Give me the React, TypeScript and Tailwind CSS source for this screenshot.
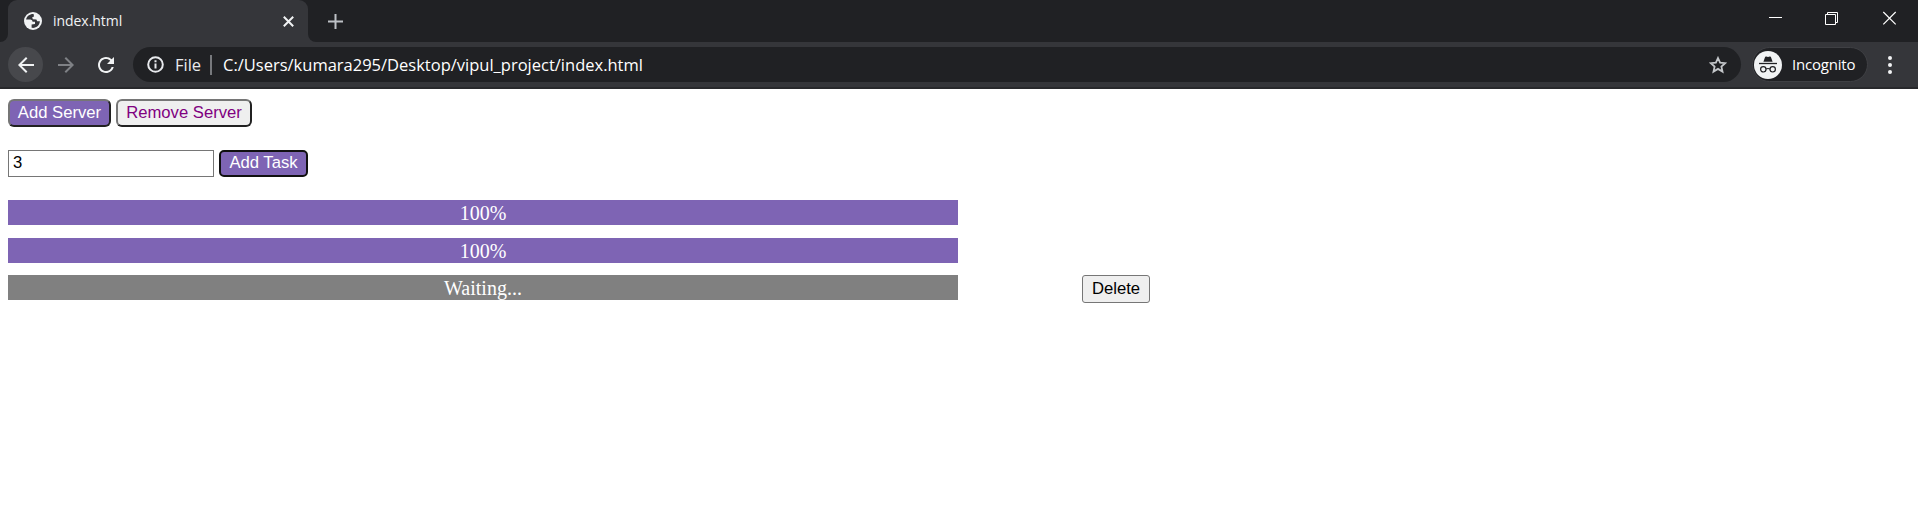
import { MdArrowBack, MdArrowForward, MdRefresh } from "react-icons/md";

function Globe() {
  return (
    <svg className="h-[18px] w-[18px]" viewBox="0 0 18 18">
      <circle cx="9" cy="9" r="9" fill="#f1f3f4" />
      <path d="M9.6 2 C5.8 1.8 2.8 4.2 2.1 7.5 L6.5 7.5 Q8.6 7.7 8.6 9.7 L11 9.7 L11 12 L7.6 12.4 L7.6 15.8 C12 16.6 15.7 13.5 15.9 9.3 L13.2 9.3 L12.4 7.4 L8.8 7.2 L8.2 5.2 L10 4.4 Z" fill="#35363a" />
    </svg>
  );
}

function Incognito() {
  return (
    <svg className="h-7 w-7" viewBox="0 0 28 28">
      <circle cx="14" cy="14" r="14" fill="#f1f3f4" />
      <path d="M9.4 10.8 L11 6.3 Q11.3 5.4 12.2 5.6 L14 6.1 L15.8 5.6 Q16.7 5.4 17 6.3 L18.6 10.8 Z" fill="#202124" />
      <path d="M5 12.5 H23" stroke="#202124" strokeWidth="1.3" />
      <g fill="none" stroke="#202124" strokeWidth="1.2">
        <circle cx="9.3" cy="18.3" r="2.7" />
        <circle cx="18.7" cy="18.3" r="2.7" />
        <path d="M12 18 Q14 17 16 18" />
      </g>
    </svg>
  );
}

function TabStrip() {
  return (
    <div className="flex h-[42px] bg-[#202124]">
      <div className="w-2 bg-[#35363a]">
        <div className="h-full w-2 rounded-br-[8px] bg-[#202124]" />
      </div>
      <div className="flex w-[300px] items-start rounded-t-[9px] bg-[#35363a] pt-3 pl-4">
        <Globe />
        <span className="ml-[11px] w-[230px] text-[14px] leading-[18px] tracking-[-0.05px] text-[#f1f3f4]">index.html</span>
        <svg className="mt-1 h-[11px] w-[11px]" viewBox="0 0 11 11" stroke="#f1f3f4" strokeWidth="2">
          <path d="M0.8 0.8L10.2 10.2M10.2 0.8L0.8 10.2" />
        </svg>
      </div>
      <div className="w-2 bg-[#35363a]">
        <div className="h-full w-2 rounded-bl-[8px] bg-[#202124]" />
      </div>
      <svg className="mt-[14px] ml-3 h-[15px] w-[15px]" viewBox="0 0 15 15" stroke="#bdc1c6" strokeWidth="2">
        <path d="M7.5 0V15M0 7.5H15" />
      </svg>
      <svg className="mt-[11px] mr-5 ml-auto h-[15px] w-[130px]" viewBox="0 0 130 15" fill="none" stroke="#fff">
        <path d="M1 6.5H14" />
        <path d="M57.5 3.5H67.5V13.5H57.5ZM59.5 3.5V1.5H69.5V11.5H67.5" />
        <path d="M115.3 1L127.7 13.4M127.7 1L115.3 13.4" strokeWidth="1.2" />
      </svg>
    </div>
  );
}

function Toolbar() {
  return (
    <div className="flex h-[47px] items-center border-b-2 border-[#28292c] bg-[#35363a] pl-2">
      <div className="flex h-[35px] w-[35px] items-center justify-center rounded-full bg-[#47484c]">
        <MdArrowBack className="h-6 w-6 text-[#f1f3f4]" />
      </div>
      <MdArrowForward className="ml-[11px] h-6 w-6 text-[#7f8185]" />
      <MdRefresh className="ml-4 h-6 w-6 text-[#f1f3f4]" />
      <div className="ml-[15px] flex h-[35px] w-[1608px] items-center rounded-full bg-[#202124] pl-[14px] text-[16.5px]">
        <svg className="h-[17px] w-[17px]" viewBox="0 0 17 17" fill="none" stroke="#e8eaed" strokeWidth="2">
          <circle cx="8.5" cy="8.5" r="7.3" />
          <path d="M8.5 7.5V12.5M8.5 4.3V6.2" />
        </svg>
        <span className="ml-[11px] w-[35px] pt-px text-[#e8eaed]">File</span>
        <span className="h-5 w-[2px] bg-[#77797d]" />
        <span className="ml-[11px] pt-px whitespace-nowrap text-white">C:/Users/kumara295/Desktop/vipul_project/index.html</span>
        <svg className="mr-[14px] ml-auto h-[18px] w-[18px]" viewBox="0 0 18 18" fill="none" stroke="#c4c7ca" strokeWidth="1.8">
          <path d="M9 2L11.1 6.7L16.2 7.2L12.4 10.6L13.5 15.6L9 12.9L4.5 15.6L5.6 10.6L1.8 7.2L6.9 6.7Z" />
        </svg>
      </div>
      <div className="ml-[11px] flex h-[35px] w-[116px] items-center rounded-full border border-[#3f4044] bg-[#202124] pl-px">
        <Incognito />
        <span className="ml-[10px] text-[15px] tracking-[-0.2px] text-white">Incognito</span>
      </div>
      <svg className="ml-[20px] h-[18px] w-1" viewBox="0 0 4 18" fill="#f1f3f4">
        <circle cx="2" cy="2" r="2" />
        <circle cx="2" cy="9" r="2" />
        <circle cx="2" cy="16" r="2" />
      </svg>
    </div>
  );
}

function Bar({ label, waiting = false }: { label: string; waiting?: boolean }) {
  return (
    <div className={waiting ? "h-[25px] w-[950px] bg-[#808080] text-center text-[20px] leading-[26px] text-white" : "h-[25px] w-[950px] bg-[#7e64b4] text-center text-[20px] leading-[26px] text-white"}>
      {label}
    </div>
  );
}

export default function App() {
  return (
    <div className="h-[519px] overflow-hidden bg-white">
      <header className="font-['Open_Sans',sans-serif]">
        <TabStrip />
        <Toolbar />
      </header>
      <main className="px-2 pt-[10px] font-['Liberation_Serif',serif]">
        <div className="flex gap-[5px] font-['Liberation_Sans',sans-serif] text-[16.67px]">
          <button className="h-7 w-[103px] rounded-[6px] border-2 border-t-[#767676] border-r-[#212121] border-b-[#212121] border-l-[#767676] bg-[#7e64b4] leading-6 text-white">Add Server</button>
          <button className="h-7 w-[136px] rounded-[6px] border-2 border-t-[#767676] border-r-[#212121] border-b-[#212121] border-l-[#767676] bg-[#efefef] leading-6 whitespace-nowrap text-[#800080]">Remove Server</button>
        </div>
        <div className="mt-[23px] flex gap-[5px] font-['Liberation_Sans',sans-serif] text-[16.67px]">
          <input className="h-[27px] w-[206px] border border-[#767676] bg-white px-1 pb-[2px] text-black outline-none" defaultValue="3" />
          <button className="h-[27px] w-[89px] rounded-[5px] border-2 border-[#101010] bg-[#7e64b4] pb-px leading-[22px] whitespace-nowrap text-white">Add Task</button>
        </div>
        <div className="mt-[23px] flex flex-col">
          <Bar label="100%" />
          <div className="mt-[13px]">
            <Bar label="100%" />
          </div>
          <div className="mt-3 flex items-start">
            <Bar label="Waiting..." waiting />
            <button className="ml-[124px] h-7 w-[68px] rounded-[3px] border border-[#767676] bg-[#efefef] font-['Liberation_Sans',sans-serif] text-[16.67px] leading-[26px] text-black">Delete</button>
          </div>
        </div>
      </main>
    </div>
  );
}
